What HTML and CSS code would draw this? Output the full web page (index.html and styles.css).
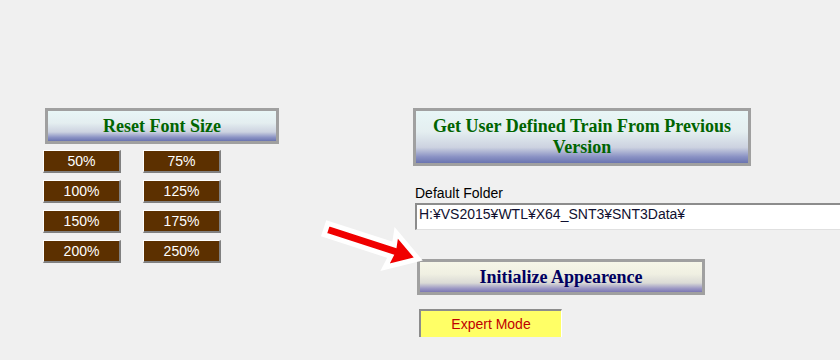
FILE: index.html
```html
<!DOCTYPE html>
<html lang="en">
<head>
    <meta charset="UTF-8">
    <title>Settings</title>
    <link rel="stylesheet" href="styles.css">
</head>
<body>
    <div class="page">
        <!-- Font size section -->
        <div class="left-col">
            <button class="big-btn reset-btn">Reset Font Size</button>
            <div class="size-grid">
                <button class="size-btn">50%</button>
                <button class="size-btn">75%</button>
                <button class="size-btn">100%</button>
                <button class="size-btn">125%</button>
                <button class="size-btn">150%</button>
                <button class="size-btn">175%</button>
                <button class="size-btn">200%</button>
                <button class="size-btn">250%</button>
            </div>
        </div>

        <!-- Folder / appearance section -->
        <div class="right-col">
            <button class="big-btn train-btn">Get User Defined Train From Previous Version</button>
            <label class="folder-label" for="folderInput">Default Folder</label>
            <input class="folder-input" id="folderInput" type="text" value="H:¥VS2015¥WTL¥X64_SNT3¥SNT3Data¥">
            <button class="big-btn init-btn">Initialize Appearence</button>
            <div class="expert-box">Expert Mode</div>
        </div>

        <svg class="arrow" width="120" height="70" viewBox="0 0 120 70">
            <g transform="translate(8 9) rotate(18)">
                <polygon points="0,-6 70,-6 68,-18 97,0 68,18 70,6 0,6" fill="#f00000" stroke="#fff" stroke-width="5" stroke-linejoin="miter"/>
            </g>
        </svg>
    </div>
</body>
</html>
```

FILE: styles.css
```css
/* General Styles */
body {
    margin: 0;
    background-color: #f0f0f0;
    font-family: "Liberation Sans", Arial, sans-serif;
    font-size: 14px;
    height: 360px;
    overflow: hidden;
}

.page {
    position: relative;
    display: flex;
    padding-top: 108px;
}

.left-col {
    flex: none;
    width: 370px;
    margin-left: 43px;
    display: flex;
    flex-direction: column;
}

.right-col {
    flex: 1;
    min-width: 0;
    display: flex;
    flex-direction: column;
    align-items: flex-start;
}

/* Gradient buttons */
.big-btn {
    font-family: "Liberation Serif", "Times New Roman", serif;
    font-weight: bold;
    font-size: 18px;
    line-height: 21px;
    border: 3px solid #a0a0a0;
    padding: 0;
    color: #006400;
    background: linear-gradient(to bottom, #e8f6f6 0%, #e4eef0 40%, #ccd2e0 70%, #8a92c4 88%, #6a74b0 100%);
    cursor: pointer;
}

.reset-btn {
    width: 234px;
    height: 36px;
    margin-left: 2px;
}

.train-btn {
    width: 338px;
    height: 58px;
    padding: 0 10px;
}

.init-btn {
    width: 288px;
    height: 36px;
    margin-left: 4px;
    margin-top: 29px;
    color: #000060;
    background: linear-gradient(to bottom, #f6f6e8 0%, #f0f0e2 40%, #dadad6 70%, #9c98c4 88%, #7c78b4 100%);
}

/* Font size buttons */
.size-grid {
    display: grid;
    grid-template-columns: 78px 78px;
    column-gap: 22px;
    row-gap: 7px;
    margin-top: 6px;
}

.size-btn {
    height: 23px;
    padding: 0;
    font-family: "Liberation Sans", Arial, sans-serif;
    font-size: 14px;
    color: #ffffff;
    background-color: #5c3000;
    border-style: solid;
    border-width: 1px 2px 2px 1px;
    border-color: #ffffff #808080 #808080 #ffffff;
    cursor: pointer;
}

/* Folder */
.folder-label {
    margin: 19px 0 0 2px;
    line-height: 16px;
    color: #000;
}

.folder-input {
    box-sizing: border-box;
    width: 440px;
    height: 27px;
    margin: 2px 0 0 2px;
    padding: 0 2px 6px;
    font-family: "Liberation Sans", Arial, sans-serif;
    font-size: 14px;
    color: #101030;
    background: #fff;
    border-style: solid;
    border-width: 2px 0 1px 2px;
    border-color: #8c8c8c #fff #e0e0e0 #8c8c8c;
    outline: none;
}

/* Expert mode */
.expert-box {
    box-sizing: border-box;
    width: 143px;
    height: 28px;
    margin: 14px 0 0 6px;
    padding-top: 5px;
    text-align: center;
    color: #c00000;
    background-color: #ffff66;
    border-style: solid;
    border-width: 2px 1px 0 2px;
    border-color: #8c8c8c #ffffff #ffffff #8c8c8c;
}

/* Arrow overlay */
.arrow {
    position: absolute;
    left: 318px;
    top: 220px;
}
```
